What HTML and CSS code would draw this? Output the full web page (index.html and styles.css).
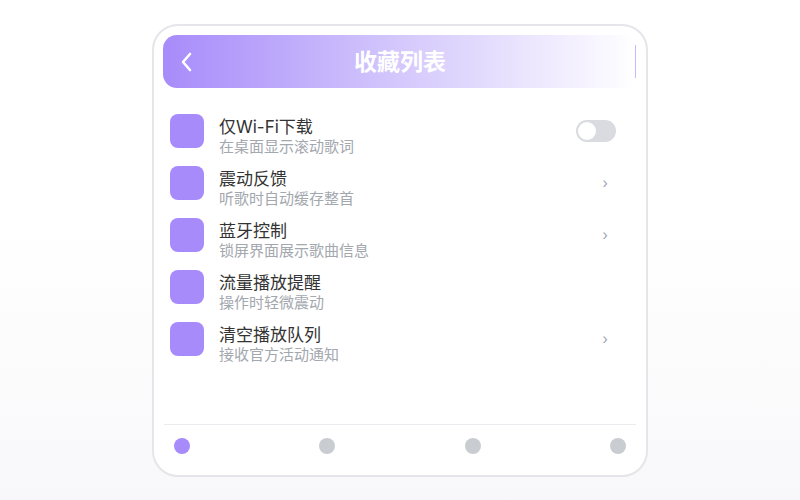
FILE: index.html
```html
<!DOCTYPE html>
<html lang="zh">
<head>
<meta charset="utf-8">
<link rel="stylesheet" href="styles.css">
</head>
<body>
<div class="frame">
  <header class="header">
    <svg class="back" width="14" height="20" viewBox="0 0 14 20"><path d="M10 2 L3 10 L10 18" fill="none" stroke="#fff" stroke-width="2.6" stroke-linecap="round" stroke-linejoin="round"/></svg>
    <h1 class="title">收藏列表</h1>
    <span class="edge"></span>
  </header>
  <ul class="list">
    <li class="row">
      <span class="icon"></span>
      <div class="text"><div class="name">仅Wi-Fi下载</div><div class="desc">在桌面显示滚动歌词</div></div>
      <span class="toggle"><span class="knob"></span></span>
    </li>
    <li class="row">
      <span class="icon"></span>
      <div class="text"><div class="name">震动反馈</div><div class="desc">听歌时自动缓存整首</div></div>
      <span class="chev">›</span>
    </li>
    <li class="row">
      <span class="icon"></span>
      <div class="text"><div class="name">蓝牙控制</div><div class="desc">锁屏界面展示歌曲信息</div></div>
      <span class="chev">›</span>
    </li>
    <li class="row">
      <span class="icon"></span>
      <div class="text"><div class="name">流量播放提醒</div><div class="desc">操作时轻微震动</div></div>
    </li>
    <li class="row">
      <span class="icon"></span>
      <div class="text"><div class="name">清空播放队列</div><div class="desc">接收官方活动通知</div></div>
      <span class="chev">›</span>
    </li>
  </ul>
  <nav class="nav">
    <span class="dot active"></span>
    <span class="dot"></span>
    <span class="dot"></span>
    <span class="dot"></span>
  </nav>
</div>
</body>
</html>
```
FILE: styles.css
```css
* { box-sizing: border-box; }
html, body { margin: 0; padding: 0; }
body {
  width: 800px;
  height: 500px;
  background: linear-gradient(to bottom, #ffffff 0%, #ffffff 45%, #f8f8fa 100%);
  font-family: Inter, "Noto Sans CJK SC", sans-serif;
  padding: 24px 0 0 152px;
}
.frame {
  width: 496px;
  height: 453px;
  border: 2px solid #e5e5ea;
  border-radius: 26px;
  background: #fff;
  padding: 9px 9px 0 9px;
  display: flex;
  flex-direction: column;
}
.header {
  position: relative;
  height: 53px;
  border-radius: 14px;
  background: linear-gradient(to right, #a78bfa 0%, #d4c8fc 50%, #ffffff 100%);
  display: flex;
  align-items: center;
  justify-content: center;
}
.back { position: absolute; left: 17px; top: 17px; }
.title {
  margin: 0;
  color: #fff;
  font-size: 23px;
  font-weight: 700;
  line-height: 30px;
}
.edge {
  position: absolute;
  right: 1px;
  top: 10px;
  width: 1px;
  height: 33px;
  background: #c9b8fc;
}
.list {
  list-style: none;
  margin: 26px 0 0 0;
  padding: 0 21px 0 7px;
  flex: 1;
}
.row {
  display: flex;
  align-items: flex-start;
  height: 52px;
}
.icon {
  flex: none;
  width: 34px;
  height: 34px;
  border-radius: 8px;
  background: #a78bfa;
}
.text { flex: 1; margin-left: 15px; padding-top: 2.5px; }
.name { font-size: 17px; line-height: 21px; color: #333; }
.desc { font-size: 15px; line-height: 18px; color: #a3a7ae; }
.toggle {
  margin-top: 6px;
  width: 40px;
  height: 22px;
  border-radius: 11px;
  background: #d9dbe0;
  padding: 2px;
}
.knob {
  display: block;
  width: 18px;
  height: 18px;
  border-radius: 50%;
  background: #fff;
}
.chev {
  margin-top: 7px;
  margin-right: 8px;
  font-size: 14px;
  line-height: 20px;
  color: #9ca3af;
}
.nav {
  border-top: 1px solid #ececf0;
  margin: 0 1px;
  padding: 13px 10px 21px;
  display: flex;
  justify-content: space-between;
}
.dot {
  width: 16px;
  height: 16px;
  border-radius: 50%;
  background: #c9ccd1;
}
.dot.active { background: #a78bfa; }
```
